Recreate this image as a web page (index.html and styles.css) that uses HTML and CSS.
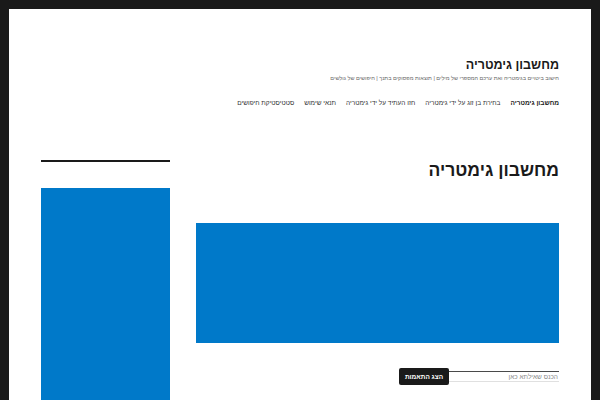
FILE: index.html
```html
<!DOCTYPE html>
<html lang="he" dir="rtl">
<head>
<meta charset="utf-8">
<title>מחשבון גימטריה</title>
<link rel="stylesheet" href="styles.css">
</head>
<body>
<div class="page">
  <header class="site-header">
    <div class="branding">
      <p class="site-title">מחשבון גימטריה</p>
      <p class="site-description">חישוב ביטויים בגימטריה ואת ערכם המספרי של מילים | תוצאות מפסוקים בתנך | חיפושים של גולשים</p>
    </div>
    <nav class="main-nav">
      <a class="nav-item current">מחשבון גימטריה</a>
      <a class="nav-item">בחירת בן זוג על ידי גימטריה</a>
      <a class="nav-item">חזו העתיד על ידי גימטריה</a>
      <a class="nav-item">תנאי שימוש</a>
      <a class="nav-item">סטטיסטיקת חיפושים</a>
    </nav>
  </header>
  <div class="content">
    <main class="main">
      <h1 class="entry-title">מחשבון גימטריה</h1>
      <div class="ad-box"></div>
      <form class="search-form">
        <input class="search-input" type="text" placeholder="הכנס שאילתא כאן">
        <button class="search-btn" type="button">הצג התאמות</button>
      </form>
    </main>
    <aside class="sidebar">
      <div class="widget-line"></div>
      <div class="side-ad"></div>
    </aside>
  </div>
</div>
</body>
</html>
```
FILE: styles.css
```css
html, body {
  margin: 0;
  padding: 0;
  height: 100%;
  overflow: hidden;
}
body {
  background: #1a1a1a;
  font-family: "Liberation Sans", Arial, sans-serif;
  color: #1a1a1a;
  padding: 9px 9px 0 9px;
  box-sizing: border-box;
}
.page {
  background: #fff;
  height: 100%;
  padding: 0 32px;
  box-sizing: border-box;
}
.site-header {
  padding-top: 48px;
}
.site-title {
  margin: 0;
  font-size: 12.5px;
  font-weight: bold;
  line-height: 17px;
}
.site-description {
  margin: 0;
  font-size: 5.5px;
  color: #686868;
  line-height: 8px;
}
.main-nav {
  display: flex;
  gap: 10px;
  margin-top: 16px;
  font-size: 6.5px;
  line-height: 10px;
}
.nav-item {
  color: #333;
}
.nav-item.current {
  font-weight: bold;
  color: #1a1a1a;
}
.content {
  display: flex;
  justify-content: space-between;
  margin-top: 52px;
}
.main {
  width: 363px;
}
.entry-title {
  margin: 0;
  font-size: 17.5px;
  font-weight: bold;
  line-height: 20px;
}
.ad-box {
  background: #0079c9;
  height: 120px;
  margin-top: 43px;
}
.search-form {
  display: flex;
  margin-top: 25px;
  align-items: center;
  width: 160px;
}
.search-input {
  width: 110px;
  height: 11px;
  box-sizing: border-box;
  border: none;
  border-top: 1px solid #4a4a4a;
  border-bottom: 1px solid #e0e0e0;
  padding: 0 1px;
  font-family: inherit;
  font-size: 6.5px;
  background: #fff;
  outline: none;
}
.search-input::placeholder {
  color: #8a8a8a;
}
.search-btn {
  width: 50px;
  height: 17px;
  background: #1a1a1a;
  color: #fff;
  border: none;
  border-radius: 2px;
  font-family: inherit;
  font-weight: bold;
  font-size: 6.5px;
  padding: 0;
}
.sidebar {
  width: 129px;
}
.widget-line {
  height: 2px;
  background: #1a1a1a;
}
.side-ad {
  background: #0079c9;
  height: 300px;
  margin-top: 26px;
}
```
